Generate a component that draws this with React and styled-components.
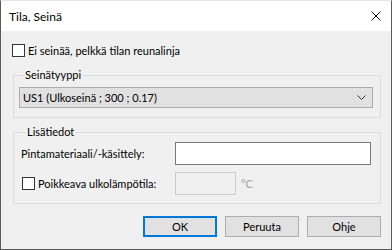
import React from "react";
import styled, { createGlobalStyle } from "styled-components";

const Global = createGlobalStyle`
  html, body { margin: 0; padding: 0; background: #ffffff; }
  body { font-family: Lato, "Noto Sans", sans-serif; font-size: 11px; color: #000; }
  * { box-sizing: border-box; }
`;

const Window = styled.div`
  width: 392px;
  height: 250px;
  border: 1px solid #5a5a5a;
  border-top-color: #e5e5e5;
  display: flex;
  flex-direction: column;
  background: #f0f0f0;
`;

const TitleBar = styled.div`
  height: 30px;
  background: #ffffff;
  display: flex;
  align-items: center;
  justify-content: space-between;
  padding: 0 10px 0 8px;
  font-size: 12px;
`;

const Content = styled.div`
  flex: 1;
  padding: 12px 10px 0 11px;
  display: flex;
  flex-direction: column;
`;

const CheckRow = styled.label`
  display: flex;
  align-items: center;
  gap: 3px;
  height: 14px;
  white-space: nowrap;
`;

const Box = styled.span`
  width: 13px;
  height: 13px;
  border: 1px solid #333333;
  background: #ffffff;
  flex: none;
`;

const Group = styled.fieldset`
  margin: ${(p) => p.$mt}px 0 0 1px;
  padding: ${(p) => p.$pad};
  border: 1px solid #dcdcdc;
  min-inline-size: 0;
  width: 368px;
`;

const Legend = styled.legend`
  padding: 0 1px;
  margin-left: 5px;
  line-height: 14px;
`;

const Combo = styled.div`
  height: 21px;
  background: #e1e1e1;
  border: 1px solid #adadad;
  display: flex;
  align-items: center;
  justify-content: space-between;
  padding: 0 6px 0 3px;
`;

const FieldRow = styled.div`
  display: flex;
  align-items: center;
  height: 23px;
  margin-top: ${(p) => p.$mt || 0}px;
`;

const FieldLabel = styled.div`
  width: 154px;
  padding-left: ${(p) => p.$pl ?? 0}px;
  white-space: nowrap;
`;

const Input = styled.div`
  width: ${(p) => p.$w}px;
  height: 23px;
  border: 1px solid ${(p) => (p.$disabled ? "#cccccc" : "#7a7a7a")};
  background: ${(p) => (p.$disabled ? "#f0f0f0" : "#ffffff")};
`;

const Unit = styled.span`
  color: #a0a0a0;
  margin-left: 5px;
`;

const Buttons = styled.div`
  display: flex;
  justify-content: flex-end;
  gap: 8px;
  margin-top: 12px;
`;

const Button = styled.div`
  width: 74px;
  height: 21px;
  background: #e1e1e1;
  border: ${(p) => (p.$default ? "2px solid #0078d7" : "1px solid #adadad")};
  display: flex;
  align-items: center;
  justify-content: center;
`;

export default function App() {
  return (
    <>
      <Global />
      <Window>
        <TitleBar>
          <span>Tila, Seinä</span>
          <svg width="10" height="10" viewBox="0 0 10 10">
            <path d="M0.5 0.5 L9.5 9.5 M9.5 0.5 L0.5 9.5" stroke="#000" strokeWidth="1" />
          </svg>
        </TitleBar>
        <Content>
          <CheckRow>
            <Box />
            <span>Ei seinää, pelkkä tilan reunalinja</span>
          </CheckRow>
          <Group $mt={11} $pad="5px 7px 9px 5px">
            <Legend>Seinätyyppi</Legend>
            <Combo>
              <span>US1 (Ulkoseinä ; 300 ; 0.17)</span>
              <svg width="9" height="5" viewBox="0 0 9 5">
                <path d="M0.5 0.5 L4.5 4.5 L8.5 0.5" stroke="#333" strokeWidth="1" fill="none" />
              </svg>
            </Combo>
          </Group>
          <Group $mt={7} $pad="3px 9px 8px 7px">
            <Legend>Lisätiedot</Legend>
            <FieldRow>
              <FieldLabel>Pintamateriaali/-käsittely:</FieldLabel>
              <Input $w={196} />
            </FieldRow>
            <FieldRow $mt={7}>
              <FieldLabel $pl={1}>
                <CheckRow>
                  <Box />
                  <span>Poikkeava ulkolämpötila:</span>
                </CheckRow>
              </FieldLabel>
              <Input $w={61} $disabled />
              <Unit>°C</Unit>
            </FieldRow>
          </Group>
          <Buttons>
            <Button $default>OK</Button>
            <Button>Peruuta</Button>
            <Button>Ohje</Button>
          </Buttons>
        </Content>
      </Window>
    </>
  );
}
